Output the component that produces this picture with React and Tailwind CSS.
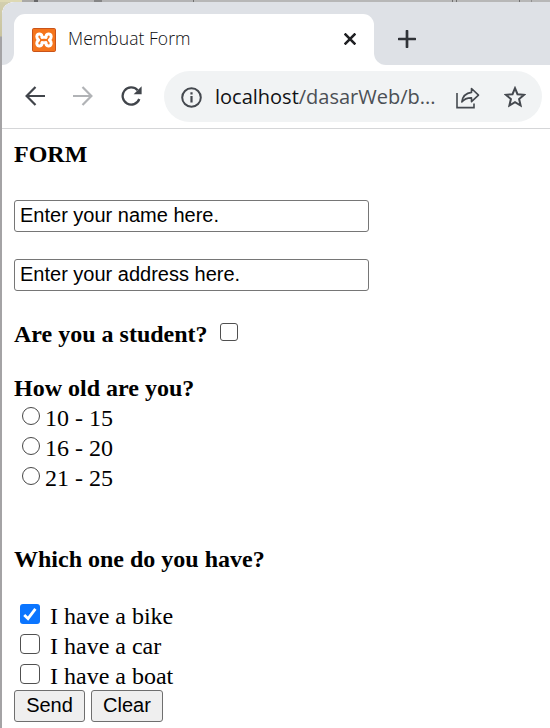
import React from "react";

const serif = "font-['Liberation_Serif','Times_New_Roman',serif]";

function XamppIcon() {
  return (
    <svg width="24" height="24" viewBox="0 0 24 24" className="shrink-0">
      <rect x="0.5" y="0.5" width="23" height="23" rx="1.2" fill="#f5751c" stroke="#c9541a" />
      <g fill="none" stroke="#fff" strokeWidth="3" strokeLinecap="round" strokeLinejoin="round">
        <path d="M10 9.2C10.3 5.4 5 4.7 4.8 8.5C4.8 10.2 5.6 11.2 6.6 12C5.6 12.8 4.8 13.8 4.8 15.5C5 19.3 10.3 18.6 10 14.8" />
        <path d="M14 9.2C13.7 5.4 19 4.7 19.2 8.5C19.2 10.2 18.4 11.2 17.4 12C18.4 12.8 19.2 13.8 19.2 15.5C19 19.3 13.7 18.6 14 14.8" />
        <path d="M10 9.4H14M10 14.6H14" strokeWidth="2.6" />
      </g>
    </svg>
  );
}

function TabStrip() {
  return (
    <div className="flex h-[63px] rounded-tl-[12px] bg-[#dee1e6]">
      <div className="flex w-3 flex-col rounded-tl-[12px] bg-white">
        <div className="h-full rounded-tl-[12px] rounded-br-[12px] bg-[#dee1e6]" />
      </div>
      <div className="w-[360px] bg-[#dee1e6] pt-3">
        <div className="flex h-[51px] items-center rounded-t-[11px] bg-white pl-[18px]">
          <XamppIcon />
          <span className="mb-0.5 ml-3 w-[276px] shrink-0 whitespace-nowrap font-['Open_Sans','Noto_Sans',sans-serif] text-[17.5px] font-light tracking-[0.05px] text-[#0c0d0f]">
            Membuat Form
          </span>
          <svg width="12" height="12" viewBox="0 0 12 12" className="mb-0.5 shrink-0">
            <path d="M0.6 0.6L11.4 11.4M11.4 0.6L0.6 11.4" stroke="#202124" strokeWidth="2.6" />
          </svg>
        </div>
      </div>
      <div className="flex-1 bg-white">
        <div className="flex h-full items-center rounded-bl-[12px] bg-[#dee1e6] pt-2.5 pl-6">
          <svg width="18" height="18" viewBox="0 0 18 18">
            <path d="M9 1V17M1 9H17" stroke="#303338" strokeWidth="2.7" strokeLinecap="round" />
          </svg>
        </div>
      </div>
    </div>
  );
}

function Toolbar() {
  return (
    <div className="flex h-16 items-center border-b border-[#d5d6d8] bg-white pr-2 pl-[23px]">
      <svg width="20" height="20" viewBox="0 0 20 20" className="mb-0.5 shrink-0" fill="none" stroke="#41454b" strokeWidth="2.2">
        <path d="M20 10H2M10.5 1L1.6 10L10.5 19" />
      </svg>
      <svg width="20" height="20" viewBox="0 0 20 20" className="mb-0.5 ml-7 shrink-0" fill="none" stroke="#b1b3b6" strokeWidth="2.2">
        <path d="M0 10H18M9.5 1L18.4 10L9.5 19" />
      </svg>
      <svg width="21" height="20" viewBox="0 0 21 20" className="mb-0.5 ml-7 shrink-0">
        <path d="M16.6 4.2A8.6 8.6 0 1 0 18.3 13" fill="none" stroke="#41454b" strokeWidth="2.3" />
        <path d="M20.6 0.2V8.2H12.6Z" fill="#41454b" />
      </svg>
      <div className="ml-[22px] flex h-[51px] min-w-0 flex-1 items-center rounded-full bg-[#f1f3f4] pl-[17px]">
        <svg width="21" height="21" viewBox="0 0 21 21" className="mt-0.5 shrink-0">
          <circle cx="10.5" cy="10.5" r="9.3" fill="none" stroke="#45494f" strokeWidth="2" />
          <path d="M10.5 9V15.5M10.5 5.2V7.4" stroke="#45494f" strokeWidth="2.2" />
        </svg>
        <span className="ml-[13px] w-[241px] shrink-0 whitespace-nowrap font-['Open_Sans','Noto_Sans',sans-serif] text-[20px] text-[#4b4f54]">
          <span className="text-[#111214]">localhost</span>/dasarWeb/b...
        </span>
        <svg width="24" height="22" viewBox="0 0 24 22" className="mt-0.5 shrink-0" fill="none" stroke="#45494f" strokeWidth="1.6">
          <path d="M1 6V20.6H18V16.5" />
          <path d="M15.5 1.5L22.5 8.2L15.5 14.6V10.9C11 10.8 8.2 12 5.8 15C6.6 9.4 10 6 15.5 5.4Z" strokeLinejoin="round" />
        </svg>
        <svg width="22" height="22" viewBox="0 0 22 22" className="ml-6 shrink-0">
          <path
            d="M11 2.2L13.5 8.2L20 8.8L15.1 13L16.6 19.5L11 16.1L5.4 19.5L6.9 13L2 8.8L8.5 8.2Z"
            fill="none"
            stroke="#45494f"
            strokeWidth="2"
          />
        </svg>
      </div>
    </div>
  );
}

function TextField({ value, className }) {
  return (
    <input
      type="text"
      defaultValue={value}
      className={
        "block h-8 w-[355px] rounded-[3px] border border-[#767676] bg-white pb-0.5 pl-[5px] font-['Liberation_Sans',Arial,sans-serif] text-[20px] text-black outline-none " +
        className
      }
    />
  );
}

function AgeOption({ label, gap }) {
  return (
    <label className="flex h-[30px] pl-2">
      <input
        type="radio"
        name="age"
        className="mt-1 size-[18px] shrink-0 appearance-none rounded-full border border-[#484848] bg-white"
      />
      <span className={gap}>{label}</span>
    </label>
  );
}

function VehicleOption({ label, checked }) {
  return (
    <label className="flex h-[30px] pl-1.5">
      {checked ? (
        <span className="mt-[3px] flex size-5 shrink-0 items-center justify-center rounded-[3px] bg-[#0b75ff]">
          <svg width="14" height="14" viewBox="0 0 14 14">
            <path d="M1.2 8L5 11.6L12.4 1.8" fill="none" stroke="#fff" strokeWidth="2.8" />
          </svg>
        </span>
      ) : (
        <input
          type="checkbox"
          className="mt-[3px] size-5 shrink-0 appearance-none rounded-[4px] border border-[#505050] bg-white"
        />
      )}
      <span className="ml-[10px]">{label}</span>
    </label>
  );
}

function PushButton({ children, className }) {
  return (
    <button
      className={
        "flex h-8 items-center justify-center rounded-[3px] border border-[#6f6f6f] bg-[#efefef] pb-0.5 font-['Liberation_Sans',Arial,sans-serif] text-[20px] leading-6 " +
        className
      }
    >
      {children}
    </button>
  );
}

/* Sliver of the window that sits behind the browser. */
function BackgroundEdge() {
  return (
    <div className="flex h-0.5">
      <div className="w-[22px] bg-[#ded9b4]" />
      <div className="w-3 bg-[#aaa9a7]" />
      <div className="w-1 bg-[#68686a]" />
      <div className="w-[56px] bg-[#b3b3b4]" />
      <div className="w-2 bg-[#858586]" />
      <div className="w-[91px] bg-[#b3b3b4]" />
      <div className="w-px bg-[#707070]" />
      <div className="w-[258px] bg-[#b7b7b7]" />
      <div className="w-px bg-[#707070]" />
      <div className="w-[3px] bg-[#b7b7b7]" />
      <div className="w-px bg-[#707070]" />
      <div className="w-[62px] bg-[#b7b7b7]" />
      <div className="w-px bg-[#707070]" />
      <div className="w-[11px] bg-[#b7b7b7]" />
      <div className="w-px bg-[#909090]" />
      <div className="flex-1 bg-[#b7b7b7]" />
    </div>
  );
}

export default function App() {
  return (
    <div className="h-[728px] w-[550px] overflow-hidden bg-[linear-gradient(#d3cfae_0px,#c9c4a0_36px,#a4a3a5_37px)]">
      <BackgroundEdge />
      <div className="ml-0.5 flex h-[726px] flex-col overflow-hidden rounded-tl-[12px] bg-white">
        <TabStrip />
        <Toolbar />
        <main className={"pt-[10px] pl-3 text-[24px] leading-[30px] text-black " + serif}>
          <h1 className="font-bold">FORM</h1>
          <TextField value="Enter your name here." className="mt-[31px]" />
          <TextField value="Enter your address here." className="mt-[27px]" />
          <label className="mt-7 flex h-[30px] font-bold">
            Are you a student?
            <input
              type="checkbox"
              className="mt-1 ml-3 size-[18px] appearance-none rounded-[3px] border border-[#505050] bg-white"
            />
          </label>
          <h2 className="mt-6 font-bold">How old are you?</h2>
          <AgeOption label="10 - 15" gap="ml-[5px]" />
          <AgeOption label="16 - 20" gap="ml-[5px]" />
          <AgeOption label="21 - 25" gap="ml-[5px]" />
          <h2 className="mt-[51px] font-bold">Which one do you have?</h2>
          <div className="mt-[27px]">
            <VehicleOption label="I have a bike" checked />
            <VehicleOption label="I have a car" />
            <VehicleOption label="I have a boat" />
          </div>
          <div className="-mt-px flex gap-1.5">
            <PushButton className="w-[71px]">Send</PushButton>
            <PushButton className="w-[72px]">Clear</PushButton>
          </div>
        </main>
      </div>
    </div>
  );
}
